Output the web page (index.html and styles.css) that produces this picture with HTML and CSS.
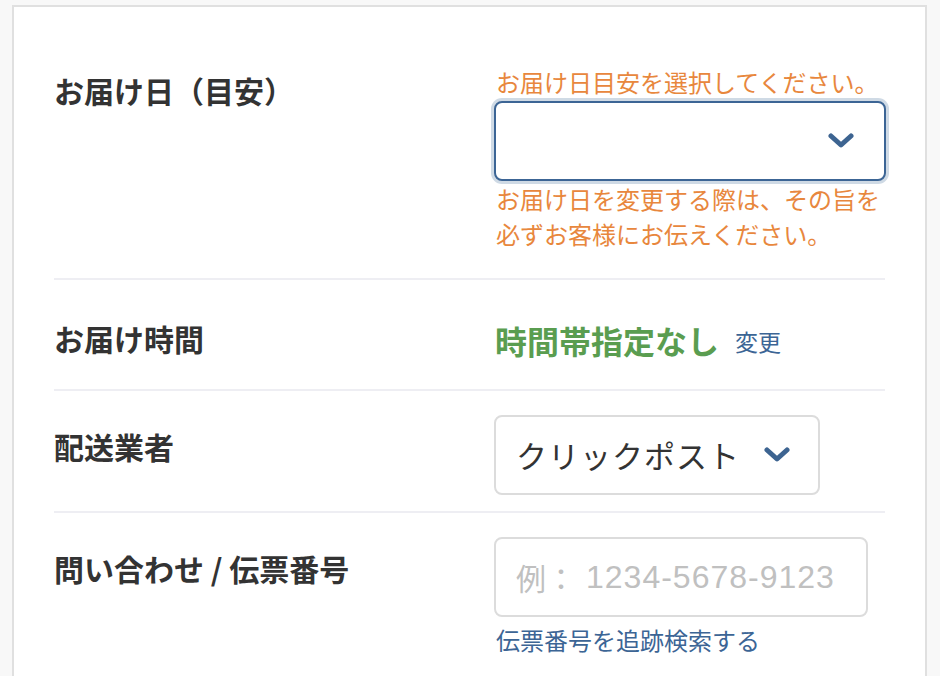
FILE: index.html
```html
<!DOCTYPE html>
<html lang="ja">
<head>
<meta charset="utf-8">
<link rel="stylesheet" href="styles.css">
</head>
<body>
<div class="card">
  <div class="row row-date">
    <div class="label label-date">お届け日（目安）</div>
    <div class="value">
      <div class="note note-top">お届け日目安を選択してください。</div>
      <div class="select select-focus">
        <span class="select-text"></span>
        <svg class="chev" width="26" height="16" viewBox="0 0 26 16"><polyline points="3,3 13,12 23,3" fill="none" stroke="#3d6491" stroke-width="5" stroke-linecap="round" stroke-linejoin="round"/></svg>
      </div>
      <div class="note">お届け日を変更する際は、その旨を<br>必ずお客様にお伝えください。</div>
    </div>
  </div>
  <div class="row row-time">
    <div class="label">お届け時間</div>
    <div class="value time-value">
      <span class="time-none">時間帯指定なし</span>
      <a class="link change">変更</a>
    </div>
  </div>
  <div class="row row-ctrl">
    <div class="label label-ctrl">配送業者</div>
    <div class="value">
      <div class="select select-carrier">
        <span class="select-text carrier-text">クリックポスト</span>
        <svg class="chev" width="26" height="16" viewBox="0 0 26 16"><polyline points="3,3 13,12 23,3" fill="none" stroke="#3d6491" stroke-width="5" stroke-linecap="round" stroke-linejoin="round"/></svg>
      </div>
    </div>
  </div>
  <div class="row row-ctrl row-last">
    <div class="label label-ctrl">問い合わせ / 伝票番号</div>
    <div class="value">
      <div class="input"><span class="placeholder">例：</span><span class="placeholder-num">1234-5678-9123</span></div>
      <a class="link track">伝票番号を追跡検索する</a>
    </div>
  </div>
</div>
</body>
</html>
```

FILE: styles.css
```css
html, body {
  margin: 0;
  padding: 0;
  background: #f8f8f8;
  font-family: "Noto Sans CJK JP", "Noto Sans", sans-serif;
  color: #333;
}
body {
  padding: 5px 13px 0 12px;
  height: 676px;
  overflow: hidden;
  box-sizing: border-box;
}
.card {
  background: #fff;
  border: 2px solid #e0e0e0;
  border-bottom: none;
  padding: 0 40px;
  min-height: 700px;
}
.row {
  display: grid;
  grid-template-columns: 440px 392px;
  border-bottom: 2px solid #eeeef3;
}
.label {
  font-size: 30px;
  font-weight: 700;
  line-height: 36px;
  color: #333;
}
.row-date {
  padding: 57px 0 27px;
}
.label-date {
  padding-top: 8px;
}
.note {
  font-size: 24px;
  line-height: 35px;
  color: #e8873d;
  padding-left: 2px;
}
.note-top {
  margin-bottom: 2px;
}
.select {
  box-sizing: border-box;
  height: 80px;
  border-radius: 8px;
  display: flex;
  align-items: center;
  justify-content: space-between;
  background: #fff;
}
.select-focus {
  border: 2px solid #3c6595;
  box-shadow: 0 0 0 3px #cfdae5;
  padding: 0 30px 0 20px;
}
.select-carrier {
  width: 326px;
  border: 2px solid #dcdcdc;
  padding: 0 28px 0 20px;
}
.select-text {
  font-size: 30px;
  color: #333;
  line-height: 36px;
}
.carrier-text {
  font-size: 31px;
  letter-spacing: 1px;
}
.chev {
  display: block;
}
.row-time {
  padding: 40px 0 30px;
}
.time-value {
  display: flex;
  align-items: center;
  line-height: 36px;
}
.time-none {
  font-size: 32px;
  font-weight: 700;
  color: #5a9d50;
  padding-left: 1px;
}
.link {
  color: #3c6595;
  font-size: 24px;
  line-height: 35px;
  text-decoration: none;
}
.change {
  margin-left: 16px;
  margin-top: 4px;
  font-size: 23px;
}
.row-ctrl {
  padding: 24px 0 16px;
}
.label-ctrl {
  padding-top: 13px;
}
.row-last {
  border-bottom: none;
}
.input {
  box-sizing: border-box;
  width: 374px;
  height: 80px;
  border: 2px solid #dcdcdc;
  border-radius: 8px;
  display: flex;
  align-items: center;
  padding-left: 20px;
}
.placeholder {
  font-size: 30px;
  color: #c0c0c0;
  line-height: 36px;
  width: 70px;
}
.placeholder-num {
  font-family: "Liberation Sans", "Noto Sans", sans-serif;
  font-size: 32px;
  letter-spacing: 1px;
  color: #c0c0c0;
  line-height: 36px;
}
.track {
  display: block;
  margin-top: 5px;
  padding-left: 2px;
}
```
